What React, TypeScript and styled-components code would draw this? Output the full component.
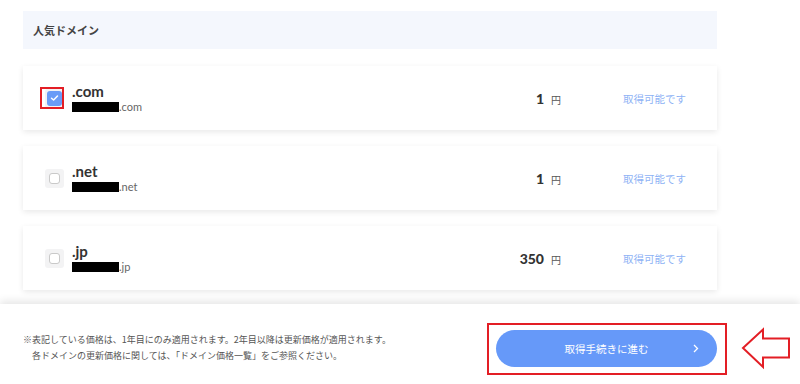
import React from "react";
import styled, { createGlobalStyle } from "styled-components";

const GlobalStyle = createGlobalStyle`
  html, body {
    margin: 0;
    padding: 0;
    background: #fff;
  }
  body {
    font-family: "Noto Sans", "Noto Sans CJK JP", sans-serif;
    color: #333;
  }
`;

const Page = styled.div`
  position: relative;
  width: 800px;
  height: 384px;
  display: flex;
  flex-direction: column;
  overflow: hidden;
`;

const ScrollArea = styled.div`
  height: 304px;
  overflow: hidden;
  padding: 11px 83px 0 23px;
  display: flex;
  flex-direction: column;
  gap: 17px;
  box-sizing: border-box;
`;

const SectionHead = styled.div`
  height: 38px;
  flex: none;
  background: #f4f7fd;
  display: flex;
  align-items: center;
  padding-left: 10px;
  font-family: "Noto Sans CJK JP", sans-serif;
  font-size: 11px;
  font-weight: 700;
  color: #444;
`;

const List = styled.div`
  display: flex;
  flex-direction: column;
  gap: 16px;
`;

const Card = styled.div`
  height: 64px;
  flex: none;
  background: #fff;
  box-shadow: 0 2px 6px rgba(0, 0, 0, 0.09);
  display: flex;
  align-items: center;
  padding-left: 22px;
  box-sizing: border-box;
`;

const CheckWrap = styled.span`
  width: 19px;
  height: 19px;
  border-radius: 3px;
  background: #f3f3f4;
  display: flex;
  align-items: center;
  justify-content: center;
  margin-right: 8px;
  flex: none;
`;

const CheckBox = styled.span<{ $on?: boolean }>`
  width: ${({ $on }) => ($on ? "15px" : "11px")};
  height: ${({ $on }) => ($on ? "15px" : "11px")};
  border-radius: 3px;
  box-sizing: border-box;
  background: ${({ $on }) => ($on ? "#6a9cf7" : "#fff")};
  border: ${({ $on }) => ($on ? "none" : "1px solid #c9c9c9")};
  display: flex;
  align-items: center;
  justify-content: center;
`;

const Names = styled.div`
  display: flex;
  flex-direction: column;
  width: 401px;
  flex: none;
`;

const Tld = styled.div`
  font-family: "Lato", "Noto Sans", sans-serif;
  font-size: 15px;
  font-weight: 700;
  color: #333;
  line-height: 16px;
`;

const Domain = styled.div`
  display: flex;
  align-items: center;
  margin-top: 2px;
  font-family: "Lato", sans-serif;
  font-size: 11px;
  color: #666;
  line-height: 12px;
`;

const Mask = styled.span`
  display: inline-block;
  width: 47px;
  height: 10px;
  background: #000;
`;

const Price = styled.div`
  width: 88px;
  flex: none;
  display: flex;
  align-items: baseline;
  justify-content: flex-end;
  gap: 7px;
`;

const Amount = styled.span`
  font-family: "Lato", sans-serif;
  font-size: 14px;
  font-weight: 900;
  color: #333;
`;

const Yen = styled.span`
  font-family: "Noto Sans CJK JP", sans-serif;
  font-size: 10px;
  color: #555;
`;

const Status = styled.div`
  margin-left: 62px;
  white-space: nowrap;
  font-family: "Noto Sans CJK JP", sans-serif;
  font-size: 10.5px;
  color: #8fb3f5;
`;

const Footer = styled.footer`
  height: 80px;
  flex: none;
  background: #fff;
  box-shadow: 0 -3px 8px rgba(0, 0, 0, 0.1);
  display: flex;
  align-items: center;
  padding: 8px 83px 0 23px;
  box-sizing: border-box;
  position: relative;
`;

const Note = styled.div`
  flex: 1;
  font-family: "Noto Sans CJK JP", sans-serif;
  font-size: 9px;
  line-height: 16px;
  color: #555;
`;

const Indent = styled.div`
  padding-left: 9px;
`;

const NextButton = styled.button`
  width: 221px;
  height: 37px;
  border: none;
  border-radius: 19px;
  background: #6699f9;
  color: #fff;
  font-family: "Noto Sans CJK JP", sans-serif;
  font-size: 10.5px;
  position: relative;
  padding: 0;
  display: flex;
  align-items: center;
  justify-content: center;
`;

const Chevron = styled.svg`
  position: absolute;
  right: 18px;
  top: 14px;
`;

const Highlight = styled.div<{ $x: number; $y: number; $w: number; $h: number }>`
  position: absolute;
  left: ${({ $x }) => $x}px;
  top: ${({ $y }) => $y}px;
  width: ${({ $w }) => $w}px;
  height: ${({ $h }) => $h}px;
  border: 2px solid #e31e25;
  box-sizing: border-box;
  pointer-events: none;
`;

const Arrow = styled.svg`
  position: absolute;
  left: 740px;
  top: 327px;
`;

const domains = [
  { tld: ".com", price: "1", checked: true },
  { tld: ".net", price: "1", checked: false },
  { tld: ".jp", price: "350", checked: false },
];

const Check = () => (
  <svg width="9" height="8" viewBox="0 0 9 8">
    <path d="M1.5 4.2 L3.6 6 L7.5 2" fill="none" stroke="#fff" strokeWidth="1.5" strokeLinecap="round" strokeLinejoin="round" />
  </svg>
);

export default function App() {
  return (
    <Page>
      <GlobalStyle />
      <ScrollArea>
        <SectionHead>人気ドメイン</SectionHead>
        <List>
          {domains.map((d) => (
            <Card key={d.tld}>
              <CheckWrap>
                <CheckBox $on={d.checked}>{d.checked && <Check />}</CheckBox>
              </CheckWrap>
              <Names>
                <Tld>{d.tld}</Tld>
                <Domain>
                  <Mask />
                  {d.tld}
                </Domain>
              </Names>
              <Price>
                <Amount>{d.price}</Amount>
                <Yen>円</Yen>
              </Price>
              <Status>取得可能です</Status>
            </Card>
          ))}
        </List>
      </ScrollArea>
      <Footer>
        <Note>
          <div>※表記している価格は、1年目にのみ適用されます。2年目以降は更新価格が適用されます。</div>
          <Indent>各ドメインの更新価格に関しては、「ドメイン価格一覧」をご参照ください。</Indent>
        </Note>
        <NextButton>
          取得手続きに進む
          <Chevron width="6" height="9" viewBox="0 0 6 9">
            <path d="M1 1 L4.5 4.5 L1 8" fill="none" stroke="#fff" strokeWidth="1.3" />
          </Chevron>
        </NextButton>
      </Footer>
      <Highlight $x={40} $y={87} $w={24} $h={22} />
      <Highlight $x={487} $y={323} $w={240} $h={52} />
      <Arrow width="52" height="44" viewBox="740 327 52 44">
        <polygon points="743,348 763,329.5 763,338.5 789,338.5 789,357.5 763,357.5 763,367" fill="#fff" stroke="#e31e25" strokeWidth="2" />
      </Arrow>
    </Page>
  );
}
